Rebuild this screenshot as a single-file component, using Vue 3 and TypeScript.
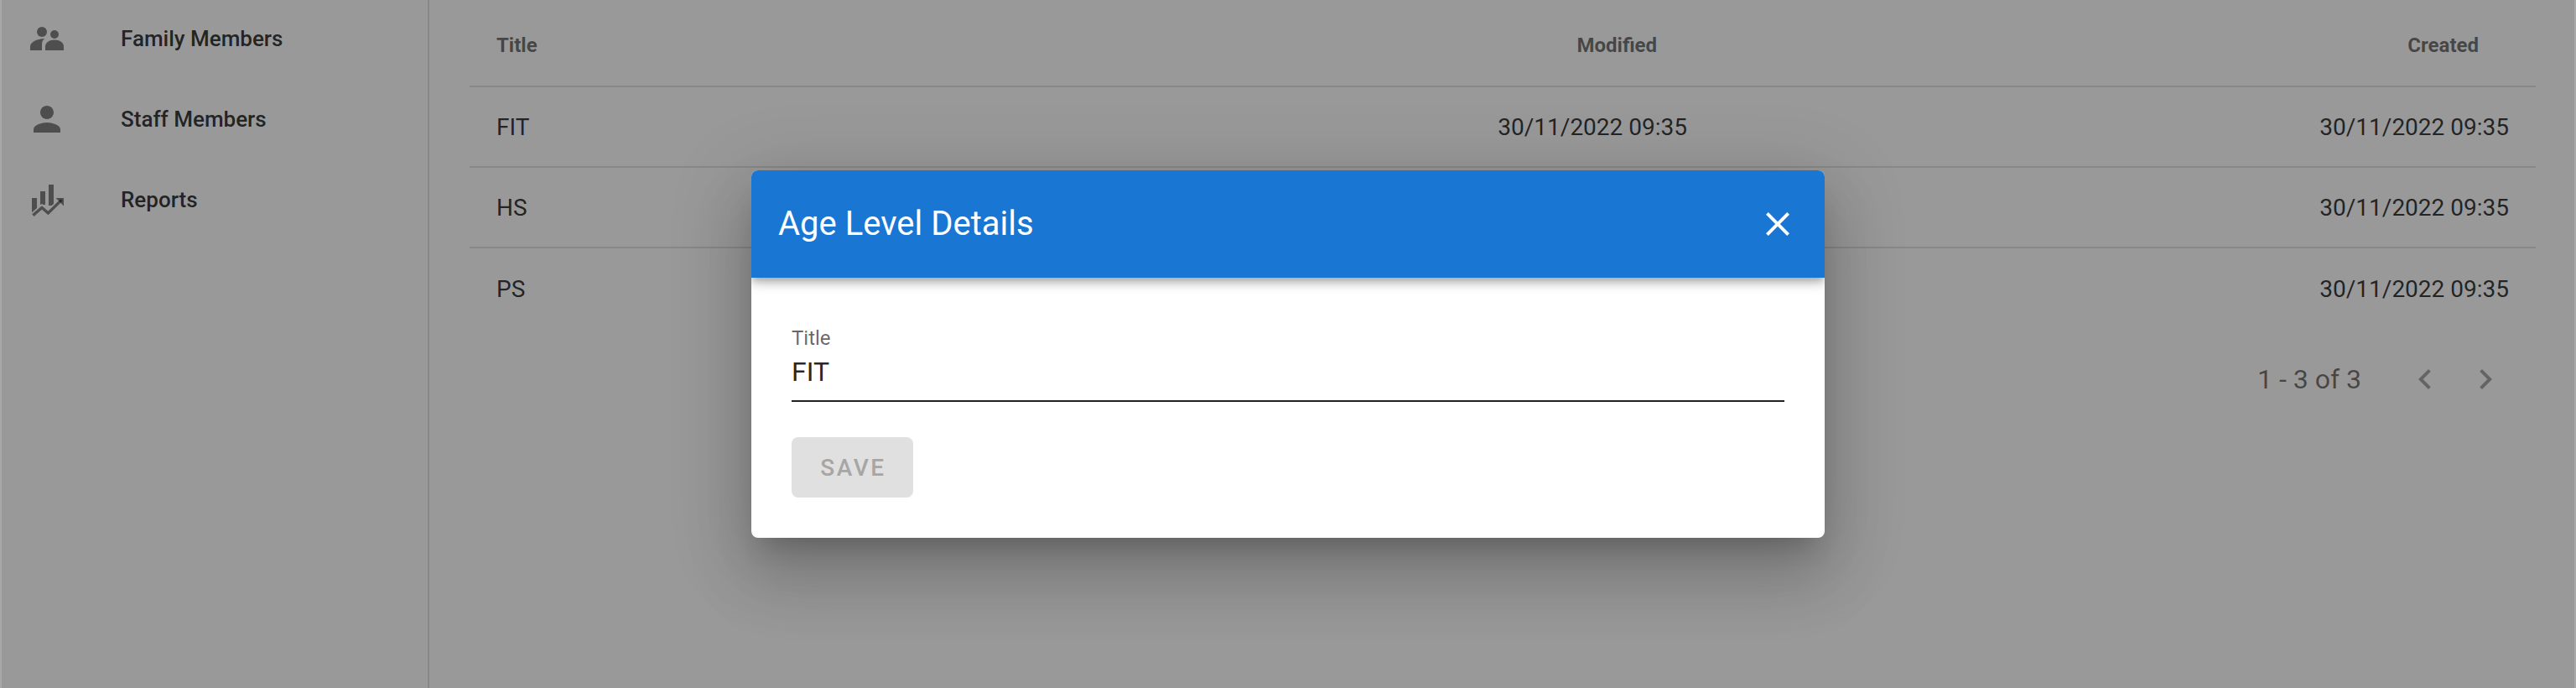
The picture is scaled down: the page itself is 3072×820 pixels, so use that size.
<script setup lang="ts">
interface NavItem {
  label: string
  icon: 'family' | 'staff' | 'reports'
}

const navItems: NavItem[] = [
  { label: 'Family Members', icon: 'family' },
  { label: 'Staff Members', icon: 'staff' },
  { label: 'Reports', icon: 'reports' }
]

const rows = ['FIT', 'HS', 'PS'].map((title) => ({
  title,
  modified: '30/11/2022 09:35',
  created: '30/11/2022 09:35'
}))
</script>

<template>
  <div class="page">
    <aside class="sidebar">
      <div v-for="item in navItems" :key="item.label" class="nav-item">
        <svg class="nav-icon" viewBox="0 0 24 24" aria-hidden="true">
          <template v-if="item.icon === 'family'">
            <circle cx="9" cy="8" r="3" />
            <circle cx="16.5" cy="9.5" r="2.5" />
            <path d="M2 19v-2.2c0-2.6 3.6-4.6 8.6-4.8-1.3 1-1.6 2.3-1.6 3.6V19z" />
            <path d="M11 19v-2.4c0-2.3 2.5-3.9 5.5-3.9s5.5 1.6 5.5 3.9V19z" />
          </template>
          <path
            v-else-if="item.icon === 'staff'"
            d="M12 12c2.21 0 4-1.79 4-4s-1.79-4-4-4-4 1.79-4 4 1.79 4 4 4zm0 2c-2.67 0-8 1.34-8 4v2h16v-2c0-2.66-5.33-4-8-4z"
          />
          <template v-else>
            <path d="M3 11h3v9H3zM8 7h3v8H8zM13 3h3v12.5h-3z" />
            <path class="chart-gap" d="M3.7 21.3L9 16.7l3.7 3.3 8-7.8" />
            <path class="chart-line" d="M3.7 21.3L9 16.7l3.7 3.3 8-7.8" />
            <path d="M17.3 11H22v4.7z" />
          </template>
        </svg>
        <span class="nav-label">{{ item.label }}</span>
      </div>
    </aside>

    <main class="content">
      <div class="table-row table-head">
        <div class="cell">Title</div>
        <div class="cell head-right">Modified</div>
        <div class="cell head-right">Created</div>
      </div>
      <div v-for="(row, i) in rows" :key="row.title" class="table-row" :class="{ 'no-line': i === rows.length - 1 }">
        <div class="cell">{{ row.title }}</div>
        <div class="cell cell-right">{{ row.modified }}</div>
        <div class="cell cell-right">{{ row.created }}</div>
      </div>
      <div class="pager">
        <span class="pager-text">1 - 3 of 3</span>
        <svg class="pager-icon" viewBox="0 0 24 24" aria-hidden="true">
          <path d="M15.41 7.41L14 6l-6 6 6 6 1.41-1.41L10.83 12z" />
        </svg>
        <svg class="pager-icon" viewBox="0 0 24 24" aria-hidden="true">
          <path d="M10 6L8.59 7.41 13.17 12l-4.58 4.59L10 18l6-6z" />
        </svg>
      </div>
    </main>

    <div class="overlay">
      <section class="dialog">
        <header class="dialog-header">
          <span class="dialog-title">Age Level Details</span>
          <svg class="close-icon" viewBox="0 0 24 24" aria-label="Close">
            <path d="M19 6.41L17.59 5 12 10.59 6.41 5 5 6.41 10.59 12 5 17.59 6.41 19 12 13.41 17.59 19 19 17.59 13.41 12z" />
          </svg>
        </header>
        <div class="dialog-body">
          <div class="field">
            <label class="field-label">Title</label>
            <div class="field-value">FIT</div>
          </div>
          <button class="save-button" disabled>SAVE</button>
        </div>
      </section>
    </div>

    <!-- lighter slivers left at both window edges -->
    <div class="edge edge-left"></div>
    <div class="edge edge-right"></div>
  </div>
</template>

<style>
body {
  background: #fff;
}
</style>

<style scoped>
.page {
  position: relative;
  display: flex;
  width: 3072px;
  height: 820px;
  overflow: hidden;
  background: #fff;
  font-family: Roboto, "Liberation Sans", sans-serif;
  color: rgba(0, 0, 0, 0.87);
}

.sidebar {
  flex: 0 0 512px;
  margin-top: -2px;
  border-right: 2px solid rgba(0, 0, 0, 0.12);
  box-sizing: border-box;
}

.nav-item {
  display: flex;
  align-items: center;
  height: 96px;
  padding-left: 32px;
}

.nav-icon {
  width: 48px;
  height: 48px;
  margin-right: 64px;
  fill: rgba(0, 0, 0, 0.54);
}

.chart-gap,
.chart-line {
  fill: none;
}

.chart-gap {
  stroke: #fff;
  stroke-width: 3.4;
}

.chart-line {
  stroke: rgba(0, 0, 0, 0.54);
  stroke-width: 1.7;
}

.nav-label {
  font-size: 26px;
  font-weight: 500;
  line-height: 32px;
}

.content {
  flex: 1;
  padding: 0 48px;
  min-width: 0;
}

.table-row {
  display: grid;
  grid-template-columns: 1fr 980px 980px;
  align-items: center;
  height: 96px;
  border-bottom: 2px solid rgba(0, 0, 0, 0.12);
  box-sizing: border-box;
  font-size: 28px;
}

.table-row.no-line {
  border-bottom: 0;
}

.table-head {
  height: 104px;
  padding-top: 6px;
  font-size: 24px;
  font-weight: 700;
  color: rgba(0, 0, 0, 0.6);
}

.cell {
  padding: 0 32px;
}

.cell-right {
  text-align: right;
}

.head-right {
  padding-right: 68px;
  text-align: right;
}

.pager {
  display: flex;
  align-items: center;
  justify-content: flex-end;
  height: 64px;
  margin-top: 28px;
  padding-right: 36px;
}

.pager-text {
  margin-right: 52px;
  font-size: 32px;
  color: rgba(0, 0, 0, 0.6);
}

.pager-icon {
  width: 48px;
  height: 48px;
  fill: rgba(0, 0, 0, 0.38);
}

.pager-icon + .pager-icon {
  margin-left: 24px;
}

.overlay {
  position: absolute;
  inset: 0;
  display: flex;
  justify-content: center;
  align-items: flex-start;
  overflow: hidden;
  padding-top: 203px;
  box-sizing: border-box;
  background: rgba(33, 33, 33, 0.46);
}

.dialog {
  width: 1280px;
  border-radius: 8px;
  overflow: hidden;
  background: #fff;
  box-shadow:
    0 22px 30px -14px rgba(0, 0, 0, 0.2),
    0 48px 76px 6px rgba(0, 0, 0, 0.14),
    0 18px 92px 16px rgba(0, 0, 0, 0.12);
}

.dialog-header {
  position: relative;
  display: flex;
  align-items: center;
  justify-content: space-between;
  height: 128px;
  padding: 0 32px;
  background: #1976d2;
  color: #fff;
  box-shadow:
    0 4px 8px -2px rgba(0, 0, 0, 0.2),
    0 8px 10px 0 rgba(0, 0, 0, 0.14),
    0 2px 20px 0 rgba(0, 0, 0, 0.12);
}

.dialog-title {
  font-size: 40px;
  line-height: 64px;
}

.close-icon {
  width: 48px;
  height: 48px;
  fill: #fff;
}

.dialog-body {
  padding: 57px 48px 48px;
}

.field-label {
  display: block;
  font-size: 24px;
  line-height: 30px;
  color: rgba(0, 0, 0, 0.6);
}

.field-value {
  height: 59px;
  border-bottom: 2px solid #212121;
  font-size: 32px;
  line-height: 50px;
}

.save-button {
  display: block;
  width: 145px;
  height: 72px;
  margin-top: 42px;
  padding: 0 0 0 2px;
  border: 0;
  border-radius: 8px;
  background: #e0e0e0;
  color: #a6a6a6;
  font-family: inherit;
  font-size: 28px;
  font-weight: 500;
  letter-spacing: 2.5px;
}

.edge {
  position: absolute;
  top: 0;
  bottom: 0;
  width: 2px;
  background: rgba(255, 255, 255, 0.15);
}

.edge-left {
  left: 0;
}

.edge-right {
  right: 0;
}
</style>
